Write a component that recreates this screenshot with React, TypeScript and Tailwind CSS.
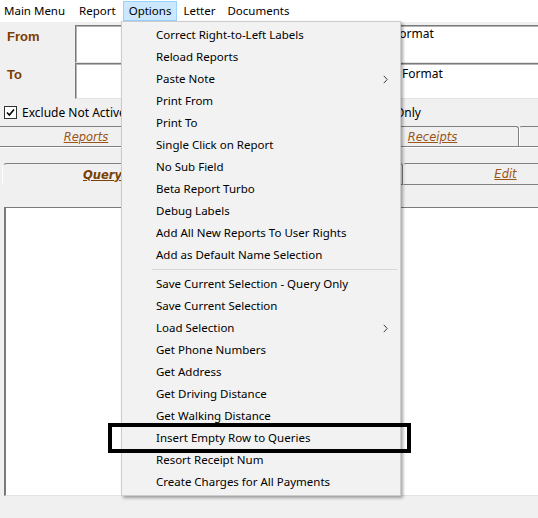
import React from "react";

const group1: { label: string; sub?: boolean }[] = [
  { label: "Correct Right-to-Left Labels" },
  { label: "Reload Reports" },
  { label: "Paste Note", sub: true },
  { label: "Print From" },
  { label: "Print To" },
  { label: "Single Click on Report" },
  { label: "No Sub Field" },
  { label: "Beta Report Turbo" },
  { label: "Debug Labels" },
  { label: "Add All New Reports To User Rights" },
  { label: "Add as Default Name Selection" },
];

const group2: { label: string; sub?: boolean }[] = [
  { label: "Save Current Selection - Query Only" },
  { label: "Save Current Selection" },
  { label: "Load Selection", sub: true },
  { label: "Get Phone Numbers" },
  { label: "Get Address" },
  { label: "Get Driving Distance" },
  { label: "Get Walking Distance" },
  { label: "Insert Empty Row to Queries" },
  { label: "Resort Receipt Num" },
  { label: "Create Charges for All Payments" },
];

function MenuItem({ label, sub }: { label: string; sub?: boolean }) {
  return (
    <div className="relative flex h-[22px] items-center pl-[34px] text-[11.5px] leading-[16px] text-black">
      <span className="whitespace-nowrap">{label}</span>
      {sub && (
        <svg
          className="absolute right-[12px] top-[7px]"
          width="5"
          height="9"
          viewBox="0 0 5 9"
        >
          <path d="M0.8 0.8 L4.2 4.5 L0.8 8.2" fill="none" stroke="#404040" strokeWidth="1" />
        </svg>
      )}
    </div>
  );
}

export default function App() {
  return (
    <div className="relative h-[518px] w-[538px] overflow-hidden bg-[#f0f0f0] font-['Noto_Sans',sans-serif] text-black">
      {/* Menu bar */}
      <div className="flex h-[22px] items-start bg-white pt-[1px] text-[11.5px] leading-[18px]">
        <div className="-ml-[3px] flex">
          <div className="border border-transparent px-[6px]">Main Menu</div>
          <div className="border border-transparent px-[6px]">Report</div>
          <div className="border border-[#99d1ff] bg-[#cce8ff] px-[5px]">Options</div>
          <div className="border border-transparent px-[5px]">Letter</div>
          <div className="border border-transparent px-[5px]">Documents</div>
        </div>
      </div>

      {/* From row */}
      <div className="mt-[3px] flex h-[38px]">
        <div className="w-[75px] shrink-0 pl-[7px] pt-[4px] font-['Liberation_Sans',Arial,sans-serif] text-[13px] font-bold leading-[16px] text-[#7c3e00]">
          From
        </div>
        <div className="w-[470px] shrink-0 border border-[#7a7a7a] border-b-[#e3e3e3] border-r-[#e3e3e3] bg-white pl-[317px] text-[12px] leading-[16px] shadow-[inset_1px_1px_0_#b4b4b4]">
          Format
        </div>
      </div>

      {/* To row */}
      <div className="flex h-[36px]">
        <div className="w-[75px] shrink-0 pl-[7px] pt-[4px] font-['Liberation_Sans',Arial,sans-serif] text-[13px] font-bold leading-[16px] text-[#7c3e00]">
          To
        </div>
        <div className="w-[470px] shrink-0 border border-[#7a7a7a] border-b-[#e3e3e3] border-r-[#e3e3e3] bg-white pl-[326px] pt-[2px] text-[12px] leading-[16px] shadow-[inset_1px_1px_0_#b4b4b4]">
          Format
        </div>
      </div>

      {/* Checkbox row */}
      <div className="flex h-[27px] w-[421px] items-start justify-between pt-[6px] text-[12px] leading-[16px]">
        <div className="flex items-start">
          <div className="ml-[4px] mt-[1px] flex h-[13px] w-[13px] items-center justify-center border border-[#333333] bg-white">
            <svg width="9" height="9" viewBox="0 0 9 9">
              <path d="M1 4.5 L3.4 7 L8 1.6" fill="none" stroke="#000" strokeWidth="1.6" />
            </svg>
          </div>
          <span className="ml-[5px] whitespace-nowrap">Exclude Not Active</span>
        </div>
        <span className="whitespace-nowrap">Only</span>
      </div>

      {/* Tab row 1 */}
      <div className="flex h-[21px] border-b border-[#808080] font-['DejaVu_Sans',sans-serif] text-[11.5px] italic leading-[14px] text-[#9a5516] shadow-[0_1px_0_#ffffff]">
        <div className="flex w-[173px] shrink-0 items-center justify-center rounded-tr-[3px] border-r border-t border-[#808080]">
          <span className="underline">Reports</span>
        </div>
        <div className="flex w-[173px] shrink-0 items-center justify-center rounded-t-[3px] border-r border-t border-[#808080] border-l border-l-white"></div>
        <div className="flex w-[173px] shrink-0 items-center justify-center rounded-t-[3px] border-r border-t border-[#808080] border-l border-l-white">
          <span className="underline">Receipts</span>
        </div>
        <div className="flex w-[60px] shrink-0 items-center justify-center rounded-tl-[3px] border-t border-[#808080] border-l border-l-white"></div>
      </div>

      {/* Tab row 2 */}
      <div className="mt-[16px] flex h-[22px] font-['DejaVu_Sans',sans-serif] text-[11.5px] italic leading-[14px] text-[#9a5516]">
        <div className="ml-[2px] flex w-[200px] shrink-0 items-center justify-center rounded-tl-[5px] border-l border-t border-[#808080] border-l-white">
          <span className="font-bold text-[#7a3f05] underline">Query</span>
        </div>
        <div className="flex w-[201px] shrink-0 items-center justify-center rounded-tr-[3px] border-b border-r border-t border-[#808080]"></div>
        <div className="flex w-[204px] shrink-0 items-center justify-center rounded-tl-[3px] border-b border-t border-[#808080] border-l border-l-white">
          <span className="underline">Edit</span>
        </div>
      </div>

      {/* List box */}
      <div className="ml-[4px] mt-[22px] h-[289px] w-[540px] border-b border-l-2 border-t border-[#7a7a7a] border-b-[#e3e3e3] bg-white"></div>

      {/* Options dropdown menu */}
      <div className="absolute left-[121px] top-[21px] w-[280px] border border-[#cccccc] bg-[#f2f2f2] py-[2px] shadow-[2px_2px_3px_rgba(0,0,0,0.35)]">
        {group1.map((it) => (
          <MenuItem key={it.label} label={it.label} sub={it.sub} />
        ))}
        <div className="flex h-[7px] items-center pl-[30px] pr-[3px]">
          <div className="h-[1px] w-full bg-[#d7d7d7]"></div>
        </div>
        {group2.map((it) => (
          <MenuItem key={it.label} label={it.label} sub={it.sub} />
        ))}
      </div>

      {/* Annotation highlight */}
      <div className="absolute left-[108px] top-[423px] h-[30px] w-[303px] border-4 border-black"></div>
    </div>
  );
}
